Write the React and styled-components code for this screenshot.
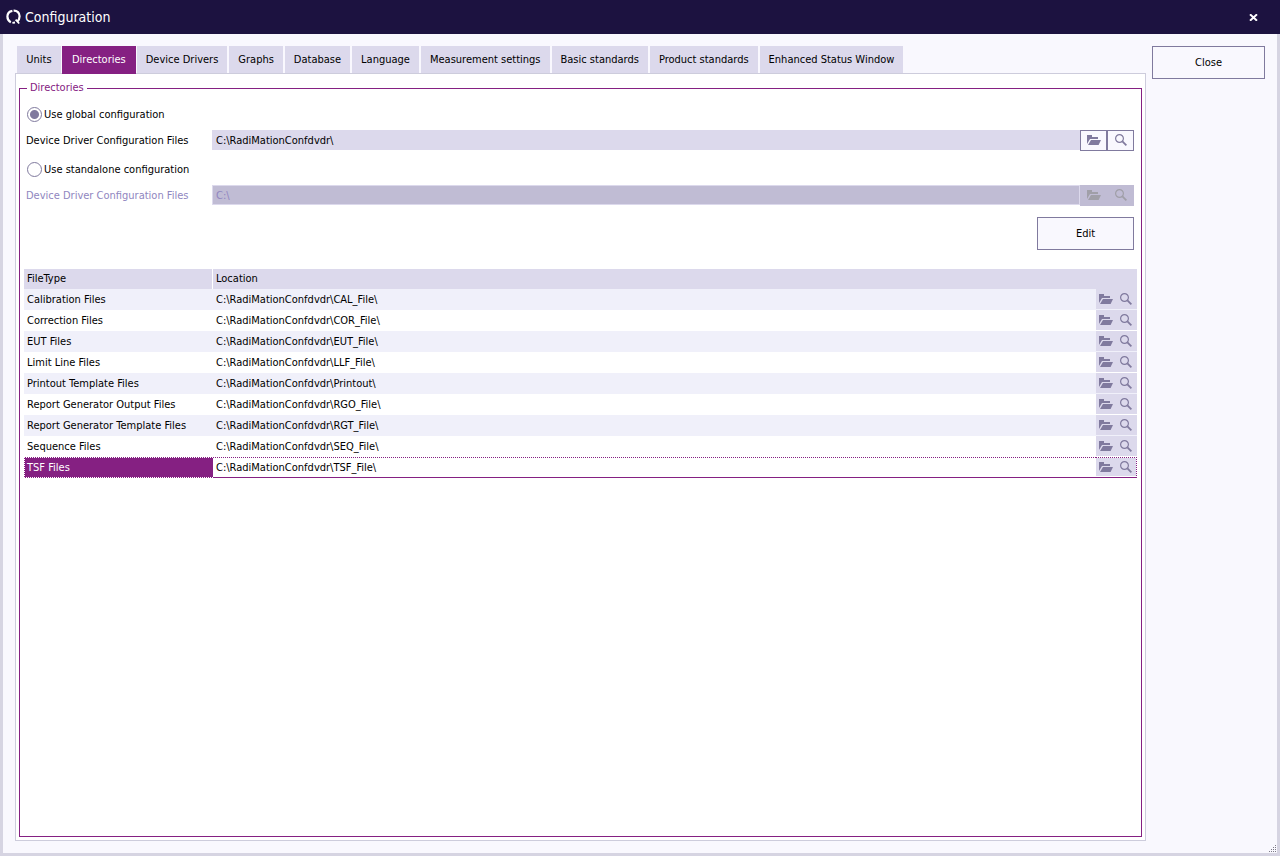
import React, { useState } from 'react';
import styled, { createGlobalStyle, css, ThemeProvider } from 'styled-components';

const theme = {
  navy: '#1c1240',
  purple: '#852082',
  frame: '#d6d4e2',
  surface: '#f9f8fe',
  lavender: '#dcd9ec',
  stripe: '#f0f0fa',
  disabled: '#c0bcd4',
  disabledText: '#9086c0',
  slate: '#807a9e',
  line: '#cdccdc'
};

const GlobalStyle = createGlobalStyle`
  * {
    box-sizing: border-box;
  }

  body {
    margin: 0;
  }

  body, button, input {
    color: #000;
    font-family: "DejaVu Sans Condensed", Tahoma, "DejaVu Sans", sans-serif;
    font-size: 11px;
    line-height: 13px;
  }
`;

const Window = styled.div`
  background: ${props => props.theme.surface};
  border: 3px solid ${props => props.theme.frame};
  border-top: 0;
  display: flex;
  flex-direction: column;
  min-height: 100vh;
  position: relative;
`;

const TitleBar = styled.header`
  align-items: center;
  background: ${props => props.theme.navy};
  color: #fff;
  display: flex;
  gap: 3px;
  height: 34px;
  margin: 0 -3px;
  padding: 0 22px 0 6px;

  h1 {
    flex: 1;
    font-size: 14px;
    font-weight: 400;
    line-height: 18px;
    margin: 0;
  }
`;

const TitleButton = styled.button`
  background: none;
  border: 0;
  display: flex;
  padding: 0;
`;

const Body = styled.div`
  align-items: stretch;
  display: flex;
  flex: 1;
  gap: 6px;
  padding: 12px;
`;

const Main = styled.main`
  display: flex;
  flex: 1;
  flex-direction: column;
`;

const TabList = styled.div`
  display: flex;
  gap: 2px;
  padding: 0 2px;
`;

const Tab = styled.button`
  background: ${props => (props.$active ? props.theme.purple : props.theme.lavender)};
  border: 0;
  color: ${props => (props.$active ? '#fff' : '#000')};
  height: 27px;
  min-width: 44px;
  padding: 0 9px;
  white-space: nowrap;

  ${props => props.$active && css`
    height: 28px;
    margin: 0 -1px -1px;
    padding: 0 10px 2px;
    z-index: 1;
  `}
`;

const Panel = styled.section`
  background: #fff;
  border: 1px solid ${props => props.theme.line};
  display: flex;
  flex: 1;
  padding: 7px 3px 3px;
`;

const Group = styled.fieldset`
  border: 1px solid ${props => props.theme.purple};
  flex: 1;
  margin: 0;
  min-width: 0;
  padding: 8px 4px 4px;

  legend {
    color: ${props => props.theme.purple};
    margin-left: 3px;
    padding: 0 3px 2px;
  }
`;

const Form = styled.div`
  display: flex;
  flex-direction: column;
  padding: 0 3px 0 2px;
`;

const RadioLabel = styled.label`
  align-items: center;
  align-self: flex-start;
  display: flex;
  gap: 2px;
  height: 20px;
`;

const Radio = styled.input`
  appearance: none;
  background: #fff;
  border: 1px solid ${props => props.theme.slate};
  border-radius: 50%;
  height: 15px;
  margin: 0 0 0 1px;
  width: 15px;

  &:checked {
    background: radial-gradient(circle, ${props => props.theme.slate} 4px, #fff 5px);
  }
`;

const PathRow = styled.div`
  align-items: flex-start;
  display: flex;
  height: 21px;
  margin: 6px 0 8px;

  label {
    color: ${props => (props.$disabled ? props.theme.disabledText : '#000')};
    flex: 0 0 186px;
    line-height: 21px;
  }
`;

const PathInput = styled.input`
  background: ${props => props.theme.lavender};
  border: 1px solid ${props => props.theme.lavender};
  flex: 1;
  height: 20px;
  min-width: 0;
  padding: 0 3px;

  &:disabled {
    background: ${props => props.theme.disabled};
    color: ${props => props.theme.disabledText};
  }
`;

const ToolButton = styled.button`
  align-items: center;
  background: ${props => props.theme.surface};
  border: 1px solid ${props => props.theme.slate};
  color: ${props => props.theme.slate};
  display: flex;
  height: 21px;
  justify-content: center;
  padding: 0;
  width: 27px;

  &:disabled {
    background: ${props => props.theme.disabled};
    border-color: ${props => props.theme.disabled};
    color: #a09fa8;
  }
`;

const PushButton = styled.button`
  align-self: flex-end;
  background: ${props => props.theme.surface};
  border: 1px solid ${props => props.theme.slate};
  height: 33px;
  padding: 0;
  width: ${props => (props.$wide ? '113px' : '97px')};

  ${Form} & {
    margin-top: 3px;
  }
`;

const Side = styled.aside`
  flex: none;
`;

const FileTable = styled.table`
  border-spacing: 0;
  margin-top: 19px;
  table-layout: fixed;
  width: 100%;

  th, td {
    font-weight: 400;
    height: 21px;
    overflow: hidden;
    padding: 0 3px;
    text-align: left;
    white-space: nowrap;
  }

  th {
    background: ${props => props.theme.lavender};
    height: 20px;
    padding-bottom: 2px;
  }

  th:first-child {
    box-shadow: inset -1px 0 #fff;
    width: 189px;
  }

  th:last-child {
    width: 41px;
  }
`;

const RowTools = styled.div`
  align-items: center;
  background: ${props => props.theme.lavender};
  display: flex;
  gap: 7px;
  height: 20px;
  margin-bottom: 1px;
  padding-left: 3px;
`;

const FileRow = styled.tr`
  background: #fff;

  &:nth-child(odd) {
    background: ${props => props.theme.stripe};
  }

  && td:last-child {
    padding: 0;
  }

  ${props => props.$selected && css`
    &&, &&:nth-child(odd) {
      background: #fff;
    }

    && td {
      border-top: 1px dotted ${props.theme.purple};
      border-bottom: 1px solid ${props.theme.purple};
    }

    && td:first-child {
      background: ${props.theme.purple};
      border: 1px dotted #fff;
      border-right: 0;
      color: #fff;
      padding-left: 2px;
    }

    && td:last-child {
      border-right: 1px dotted ${props.theme.purple};
    }

    ${RowTools} {
      height: 18px;
    }
  `}
`;

const RowButton = styled.button`
  background: none;
  border: 0;
  color: ${props => props.theme.slate};
  display: flex;
  padding: 0;
`;

const Grip = styled.svg`
  bottom: 0;
  position: absolute;
  right: 0;
`;

const LogoIcon = () => (
  <svg width="16" height="16" viewBox="0 0 16 16" fill="none" stroke="#fff" aria-hidden="true">
    <path d="M6.4 1.8C3.4 2.4 1.4 4.8 1.4 7.6c0 2.6 1.2 4.6 3.4 5.8" strokeWidth="2.2" />
    <path d="M7.6 1.7c3.6-.2 6 2.2 6 5.6 0 2-.8 3.8-2.2 5" strokeWidth="2.2" />
    <path d="M9.6 10.6l3.6 3.9M6.4 13.9l2.6-.4" strokeWidth="1.8" />
  </svg>
);

const CrossIcon = () => (
  <svg width="9" height="7" viewBox="0 0 9 7" aria-hidden="true">
    <path d="M1 0.3L8 6.7M8 0.3L1 6.7" stroke="#fff" strokeWidth="2" />
  </svg>
);

const FolderIcon = () => (
  <svg width="14" height="11" viewBox="0 0 14 11" fill="currentColor" aria-hidden="true">
    <path d="M0 0h5v2h6v2H3L0 9z" />
    <path d="M4 5h10l-2.4 5H1z" />
  </svg>
);

const SearchIcon = () => (
  <svg width="12" height="13" viewBox="0 0 12 13" fill="none" stroke="currentColor" aria-hidden="true">
    <circle cx="4.5" cy="4.5" r="3.9" strokeWidth="1.2" />
    <path d="M7.4 7.4l4 4" strokeWidth="1.8" />
  </svg>
);

const tabs = [
  'Units',
  'Directories',
  'Device Drivers',
  'Graphs',
  'Database',
  'Language',
  'Measurement settings',
  'Basic standards',
  'Product standards',
  'Enhanced Status Window'
];

const root = 'C:\\RadiMationConfdvdr\\';

const files = [
  { type: 'Calibration Files', folder: 'CAL_File' },
  { type: 'Correction Files', folder: 'COR_File' },
  { type: 'EUT Files', folder: 'EUT_File' },
  { type: 'Limit Line Files', folder: 'LLF_File' },
  { type: 'Printout Template Files', folder: 'Printout' },
  { type: 'Report Generator Output Files', folder: 'RGO_File' },
  { type: 'Report Generator Template Files', folder: 'RGT_File' },
  { type: 'Sequence Files', folder: 'SEQ_File' },
  { type: 'TSF Files', folder: 'TSF_File' }
];

const PathField = ({ id, value, disabled }) => (
  <PathRow $disabled={disabled}>
    <label htmlFor={id}>Device Driver Configuration Files</label>
    <PathInput id={id} defaultValue={value} disabled={disabled} />
    <ToolButton type="button" aria-label="Browse" disabled={disabled}><FolderIcon /></ToolButton>
    <ToolButton type="button" aria-label="Search" disabled={disabled}><SearchIcon /></ToolButton>
  </PathRow>
);

function App() {
  const [activeTab, setActiveTab] = useState('Directories');
  const [mode, setMode] = useState('global');
  const [selected, setSelected] = useState('TSF Files');

  return (
    <ThemeProvider theme={theme}>
      <GlobalStyle />
      <Window>
        <TitleBar>
          <LogoIcon />
          <h1>Configuration</h1>
          <TitleButton type="button" aria-label="Close window"><CrossIcon /></TitleButton>
        </TitleBar>
        <Body>
          <Main>
            <TabList role="tablist">
              {tabs.map(tab => (
                <Tab
                  key={tab}
                  type="button"
                  role="tab"
                  aria-selected={tab === activeTab}
                  $active={tab === activeTab}
                  onClick={() => setActiveTab(tab)}
                >
                  {tab}
                </Tab>
              ))}
            </TabList>
            <Panel role="tabpanel">
              <Group>
                <legend>Directories</legend>
                <Form>
                  <RadioLabel>
                    <Radio
                      type="radio"
                      name="mode"
                      checked={mode === 'global'}
                      onChange={() => setMode('global')}
                    />
                    Use global configuration
                  </RadioLabel>
                  <PathField id="global-path" value={root} disabled={mode !== 'global'} />
                  <RadioLabel>
                    <Radio
                      type="radio"
                      name="mode"
                      checked={mode === 'standalone'}
                      onChange={() => setMode('standalone')}
                    />
                    Use standalone configuration
                  </RadioLabel>
                  <PathField id="standalone-path" value={'C:\\'} disabled={mode !== 'standalone'} />
                  <PushButton type="button">Edit</PushButton>
                </Form>
                <FileTable>
                  <thead>
                    <tr>
                      <th>FileType</th>
                      <th>Location</th>
                      <th aria-label="Actions" />
                    </tr>
                  </thead>
                  <tbody>
                    {files.map(({ type, folder }) => (
                      <FileRow key={type} $selected={type === selected} onClick={() => setSelected(type)}>
                        <td>{type}</td>
                        <td>{`${root}${folder}\\`}</td>
                        <td>
                          <RowTools>
                            <RowButton type="button" aria-label="Browse"><FolderIcon /></RowButton>
                            <RowButton type="button" aria-label="Search"><SearchIcon /></RowButton>
                          </RowTools>
                        </td>
                      </FileRow>
                    ))}
                  </tbody>
                </FileTable>
              </Group>
            </Panel>
          </Main>
          <Side>
            <PushButton type="button" $wide>Close</PushButton>
          </Side>
        </Body>
        <Grip width="8" height="8" viewBox="0 0 8 8" fill="#7d7b88" aria-hidden="true">
          <path d="M6 0h1v1h-1zM4 2h1v1h-1zM6 2h1v1h-1zM2 4h1v1h-1zM4 4h1v1h-1zM6 4h1v1h-1zM0 6h1v1h-1zM2 6h1v1h-1zM4 6h1v1h-1zM6 6h1v1h-1z" />
        </Grip>
      </Window>
    </ThemeProvider>
  );
}

export default App;
